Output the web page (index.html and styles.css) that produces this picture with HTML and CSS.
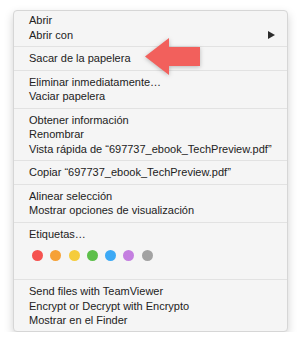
FILE: index.html
```html
<!DOCTYPE html>
<html lang="es">
<head>
    <meta charset="UTF-8">
    <meta name="viewport" content="width=device-width, initial-scale=1.0">
    <title>Menú contextual</title>
    <link rel="stylesheet" href="styles.css">
</head>
<body>
    <div class="menu">
        <div class="group">
            <div class="item">Abrir</div>
            <div class="item submenu">Abrir con <span class="caret"></span></div>
        </div>
        <div class="group">
            <div class="item">Sacar de la papelera</div>
        </div>
        <div class="group">
            <div class="item">Eliminar inmediatamente…</div>
            <div class="item">Vaciar papelera</div>
        </div>
        <div class="group">
            <div class="item">Obtener información</div>
            <div class="item">Renombrar</div>
            <div class="item">Vista rápida de “697737_ebook_TechPreview.pdf”</div>
        </div>
        <div class="group">
            <div class="item">Copiar “697737_ebook_TechPreview.pdf”</div>
        </div>
        <div class="group">
            <div class="item">Alinear selección</div>
            <div class="item">Mostrar opciones de visualización</div>
        </div>
        <div class="group tags">
            <div class="item">Etiquetas…</div>
            <div class="dots">
                <span class="dot red"></span>
                <span class="dot orange"></span>
                <span class="dot yellow"></span>
                <span class="dot green"></span>
                <span class="dot blue"></span>
                <span class="dot purple"></span>
                <span class="dot gray"></span>
            </div>
        </div>
        <div class="group last">
            <div class="item">Send files with TeamViewer</div>
            <div class="item">Encrypt or Decrypt with Encrypto</div>
            <div class="item">Mostrar en el Finder</div>
        </div>

        <!-- callout arrow pointing at the highlighted item -->
        <svg class="pointer" width="66" height="48" viewBox="0 0 66 48">
            <polygon points="5,23.5 29,5 29,14 60,14 60,33 29,33 29,42" fill="#f2605c"/>
        </svg>
    </div>
</body>
</html>
```

FILE: styles.css
```css
* {
    box-sizing: border-box;
}

body {
    margin: 0;
    background: #ffffff;
    font-family: 'Liberation Sans', Arial, sans-serif;
    font-size: 11px;
    color: #222222;
}

.menu {
    position: relative;
    margin: 10px 0 0 13px;
    width: 275px;
    background-color: #f5f5f5;
    border: 1px solid #d6d6d6;
    border-radius: 4px;
    padding: 2px 0 3px;
    box-shadow: 0 4px 10px rgba(0, 0, 0, 0.18);
}

.group {
    border-bottom: 1px solid #e2e2e2;
    padding-bottom: 4px;
    margin-bottom: 4px;
}

.group.last {
    border-bottom: none;
    padding-bottom: 0;
    margin-bottom: 0;
}

.item {
    line-height: 14.5px;
    padding-left: 15px;
    white-space: nowrap;
}

.submenu {
    display: flex;
    justify-content: space-between;
    align-items: center;
    padding-right: 12px;
}

.caret {
    width: 0;
    height: 0;
    border-top: 4px solid transparent;
    border-bottom: 4px solid transparent;
    border-left: 7px solid #2c2c2c;
}

.tags {
    padding-bottom: 18.5px;
}

.dots {
    display: flex;
    gap: 7.3px;
    margin: 8.5px 0 0 18px;
}

.dot {
    width: 11px;
    height: 11px;
    border-radius: 50%;
}

.red { background-color: #f5524f; }
.orange { background-color: #f6a136; }
.yellow { background-color: #f5cc3c; }
.green { background-color: #5dbf4a; }
.blue { background-color: #3ca9f5; }
.purple { background-color: #c47fe0; }
.gray { background-color: #a2a2a2; }

.pointer {
    position: absolute;
    left: 126px;
    top: 22px;
    filter: drop-shadow(0 1px 2px rgba(0, 0, 0, 0.25));
}
```
